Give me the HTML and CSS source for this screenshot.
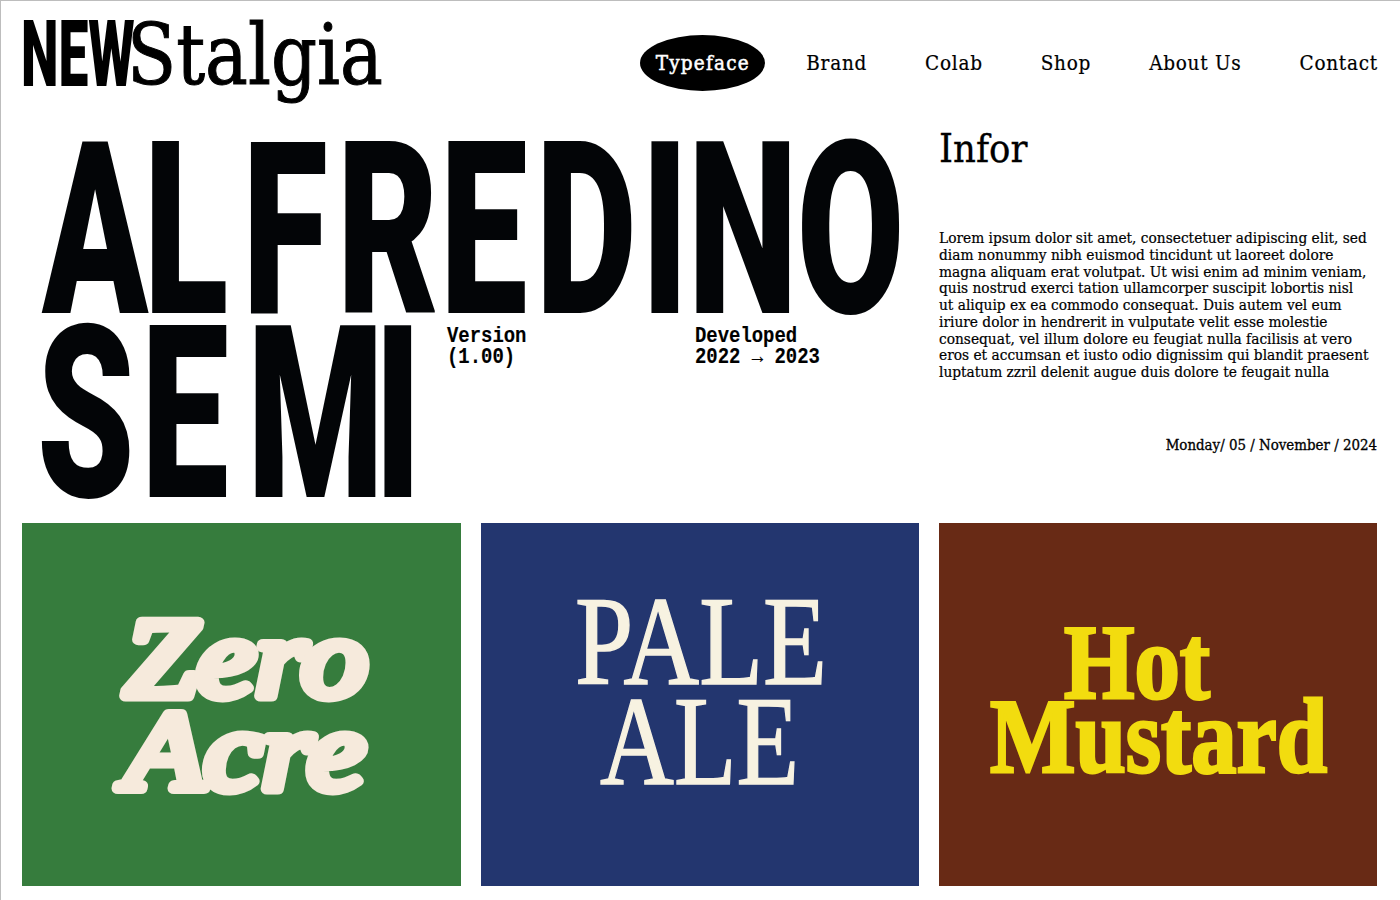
FILE: index.html
```html
<!DOCTYPE html>
<html lang="en">
<head>
<meta charset="utf-8">
<title>NEWStalgia</title>
<link rel="stylesheet" href="styles.css">
</head>
<body>
<div class="page">
  <header class="top">
    <a class="logo"><span class="logo-new">NEW</span><span class="logo-rest">Stalgia</span></a>
    <nav class="nav">
      <a class="nav-item active">Typeface</a>
      <a class="nav-item">Brand</a>
      <a class="nav-item">Colab</a>
      <a class="nav-item">Shop</a>
      <a class="nav-item">About Us</a>
      <a class="nav-item">Contact</a>
    </nav>
  </header>
  <section class="hero">
    <div class="hero-main">
      <h1 class="display line-one"><span class="ls-n7">A</span><span class="ls-22">L</span><span class="ls-14">F</span><span class="ls-2">R</span><span class="ls-13">E</span><span class="ls-7">D</span><span class="ls-n1">I</span><span class="ls-n1">N</span>O</h1>
      <div class="row-two">
        <div class="display line-two"><span class="ls-10">S</span><span class="ls-29">E</span><span class="ls-n15">M</span>I</div>
        <div class="meta"><span class="meta-inner">Version<br>(1.00)</span></div>
        <div class="meta"><span class="meta-inner">Developed<br>2022 → 2023</span></div>
      </div>
    </div>
    <aside class="info">
      <h2 class="info-title">Infor</h2>
      <p class="info-body">Lorem ipsum dolor sit amet, consectetuer adipiscing elit, sed<br>diam nonummy nibh euismod tincidunt ut laoreet dolore<br>magna aliquam erat volutpat. Ut wisi enim ad minim veniam,<br>quis nostrud exerci tation ullamcorper suscipit lobortis nisl<br>ut aliquip ex ea commodo consequat. Duis autem vel eum<br>iriure dolor in hendrerit in vulputate velit esse molestie<br>consequat, vel illum dolore eu feugiat nulla facilisis at vero<br>eros et accumsan et iusto odio dignissim qui blandit praesent<br>luptatum zzril delenit augue duis dolore te feugait nulla</p>
      <p class="info-date">Monday/ 05 / November / 2024</p>
    </aside>
  </section>
  <section class="cards">
    <article class="card card-green">
      <svg class="art" viewBox="0 0 439 362">
        <text class="zero" x="102" y="172" textLength="243" lengthAdjust="spacingAndGlyphs">Zero</text>
        <text class="zero" x="103" y="265" textLength="240" lengthAdjust="spacingAndGlyphs">Acre</text>
      </svg>
    </article>
    <article class="card card-blue">
      <svg class="art" viewBox="0 0 438 362">
        <text class="pale" x="94" y="160" textLength="252" lengthAdjust="spacingAndGlyphs">PALE</text>
        <text class="pale" x="119" y="260" textLength="199" lengthAdjust="spacingAndGlyphs">ALE</text>
      </svg>
    </article>
    <article class="card card-brown">
      <svg class="art" viewBox="0 0 438 362">
        <text class="hot" x="125" y="174" textLength="146" lengthAdjust="spacingAndGlyphs">Hot</text>
        <text class="hot" x="51" y="248" textLength="337" lengthAdjust="spacingAndGlyphs">Mustard</text>
      </svg>
    </article>
  </section>
</div>
</body>
</html>
```
FILE: styles.css
```css
* { box-sizing: border-box; margin: 0; padding: 0; }
html, body { background: #fff; }
body { width: 1400px; height: 900px; overflow: hidden; }
.page {
  width: 1400px; height: 900px;
  border-top: 1px solid #bdbdbd; border-left: 1px solid #bdbdbd;
  display: flex; flex-direction: column;
  color: #000;
  font-family: "DejaVu Serif", serif;
  font-stretch: 75%;
}
.top {
  height: 122px; padding: 0 22px 0 20px;
  display: flex; justify-content: space-between; align-items: flex-start;
}
.logo { display: flex; padding-top: 4px; height: 110px; }
.logo-new {
  display: block; width: 106px;
  font: 900 92px/100px Roboto, sans-serif;
  transform: scaleX(.58); transform-origin: 0 0; white-space: nowrap;
}
.logo-rest {
  display: block;
  font: 400 85px/100px "DejaVu Serif", serif;
  font-stretch: 75%;
  -webkit-text-stroke: 1px #000;
  transform: scaleX(.94); transform-origin: 0 0; white-space: nowrap;
}
.nav { display: flex; align-items: center; gap: 58px; height: 56px; margin-top: 34px; }
.nav-item { font-size: 20.5px; line-height: 56px; letter-spacing: .75px; white-space: nowrap; -webkit-text-stroke: .2px #000; }
.nav-item.active {
  width: 125px; height: 56px; margin-right: -17px; text-align: center;
  background: #000; color: #fff; border-radius: 50%; letter-spacing: 1.2px;
  -webkit-text-stroke: .5px #fff;
}
.hero {
  height: 400px; padding: 0 22px 0 21px;
  display: flex;
}
.hero-main { width: 917px; padding: 15px 0 0 20px; flex: none; }
.display {
  font: 900 242px/184px Roboto, "Liberation Sans", sans-serif;
  color: #030507; white-space: nowrap;
  transform: scaleX(.645); transform-origin: 0 0;
}
.ls-n15 { letter-spacing: -15px; }
.ls-n7 { letter-spacing: -7px; }
.ls-n1 { letter-spacing: -1px; }
.ls-2 { letter-spacing: 2px; }
.ls-7 { letter-spacing: 7px; }
.ls-10 { letter-spacing: 10px; }
.ls-13 { letter-spacing: 13px; }
.ls-14 { letter-spacing: 14px; }
.ls-22 { letter-spacing: 22px; }
.ls-29 { letter-spacing: 29px; }
.row-two { display: flex; }
.line-two { width: 405px; flex: none; margin-left: -5px; margin-right: 5px; }
.meta { width: 248px; flex: none; padding-top: 4px; }
.meta-inner {
  display: block; white-space: nowrap;
  font: 700 22px/21px "Liberation Mono", monospace;
  -webkit-text-stroke: .15px #000;
  transform: scaleX(.86); transform-origin: 0 0;
}
.info { width: 438px; flex: none; display: flex; flex-direction: column; }
.info-title { padding-top: 1px; font-size: 39.5px; line-height: 48px; font-weight: 400; -webkit-text-stroke: .3px #000; }
.info-body { margin-top: 58px; font-size: 15.3px; line-height: 16.75px; white-space: nowrap; -webkit-text-stroke: .2px #000; }
.info-date { margin-top: 56px; text-align: right; font-size: 14.9px; line-height: 17px; -webkit-text-stroke: .3px #000; }
.cards {
  padding: 0 22px 0 21px;
  display: grid; grid-template-columns: 439px 438px 438px; column-gap: 20px;
}
.card { height: 363px; }
.art { display: block; width: 100%; height: 100%; }
.card-green { background: #367c3d; }
.card-blue { background: #23366f; }
.card-brown { background: #682a15; }
.zero {
  font: italic 400 112px "Liberation Serif", serif;
  fill: #f6eadc; stroke: #f6eadc; stroke-width: 11px; stroke-linejoin: round; stroke-linecap: round;
}
.pale { font: 400 127px "Liberation Serif", serif; fill: #f7f2e1; stroke: #f7f2e1; stroke-width: 1.5px; }
.hot {
  font: 700 106px "Liberation Serif", serif;
  fill: #f2dc0f; stroke: #f2dc0f; stroke-width: 3px;
}
```
